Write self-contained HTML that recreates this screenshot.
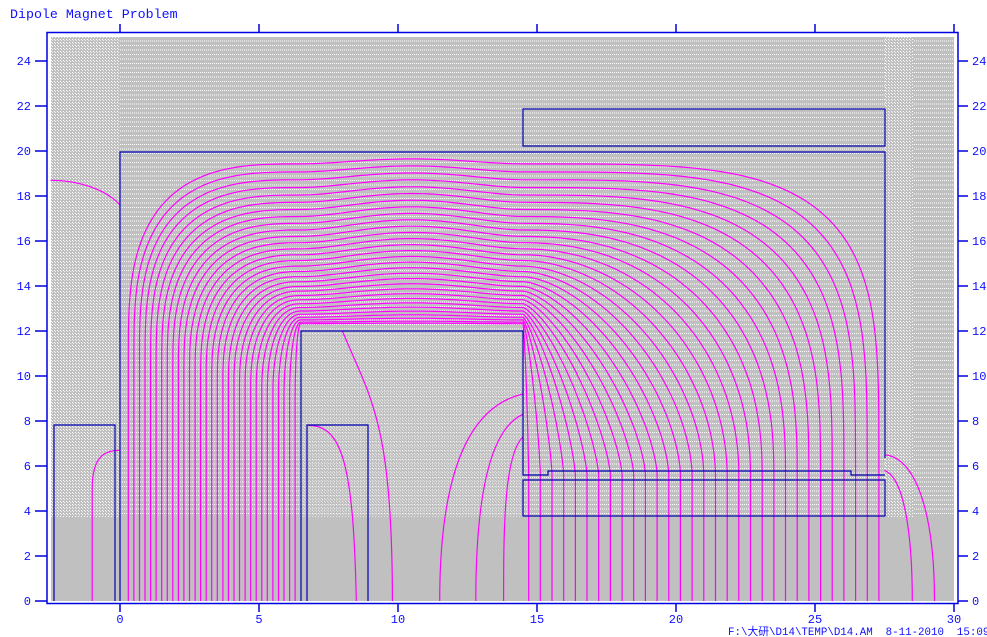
<!DOCTYPE html>
<html><head><meta charset="utf-8"><style>
html,body{margin:0;padding:0;background:#fff;width:987px;height:637px;overflow:hidden}
svg{display:block}
text{font-family:"Liberation Mono","Noto Sans CJK SC",monospace;fill:#1010ff;font-size:12px;white-space:pre}
</style></head><body>
<svg id="s" width="987" height="637" xmlns="http://www.w3.org/2000/svg">
<defs>
<pattern id="dense" width="3" height="3" patternUnits="userSpaceOnUse"><rect width="3" height="3" fill="#c0c0c0"/><rect x="0" y="0" width="1" height="1" fill="#fff"/><rect x="1" y="1" width="1" height="1" fill="#f0f0f0"/></pattern>
<pattern id="sparse" width="6" height="4.5" patternUnits="userSpaceOnUse"><rect width="6" height="4.5" fill="#c0c0c0"/><rect x="0" y="0" width="1" height="1" fill="#fff"/><rect x="2" y="0" width="1" height="1" fill="#fff"/><rect x="4" y="0" width="1" height="1" fill="#fff"/></pattern>
</defs>
<text x="10" y="18" style="font-size:13.3px">Dipole Magnet Problem</text>
<rect x="47" y="32.5" width="911" height="571" fill="none" stroke="#0000e0" stroke-width="1.5"/>
<rect x="51" y="37" width="903" height="564" fill="#c0c0c0"/>
<rect x="51" y="37" width="903" height="480" fill="url(#sparse)"/>
<rect x="51" y="37" width="69" height="480" fill="url(#dense)"/>
<rect x="885" y="37" width="28" height="480" fill="url(#dense)"/>
<rect x="301" y="331" width="222" height="186" fill="url(#dense)" opacity="0.6"/>
<g id="fl" fill="none" stroke="#ff00ff" stroke-width="1.2"></g>
<g fill="none" stroke="#0000b0" stroke-width="1.2">
<path d="M120 601 V152 H885 V458"/>
<rect x="523" y="109" width="362" height="37"/>
<path d="M301 601 V331 H523 V475 H548 V471 H851 V475 H885"/>
<rect x="523" y="480" width="362" height="36"/>
<path d="M54 601 V425 H115 V601"/>
<path d="M307 601 V425 H368 V601"/>
</g>
<g id="ax" stroke="#0000e0" stroke-width="1.5"></g>
<text x="728" y="635" style="font-size:10.8px" xml:space="preserve">F:\大研\D14\TEMP\D14.AM  8-11-2010  15:09:36</text>
</svg>
<script>
var X=u=>(120+27.8*u).toFixed(1), Y=v=>(601-22.5*v).toFixed(1);
function pt(u,v){return X(u)+' '+Y(v);}
var fl=document.getElementById('fl'),ax=document.getElementById('ax'),s=document.getElementById('s');
function P(d){var p=document.createElementNS('http://www.w3.org/2000/svg','path');p.setAttribute('d',d);fl.appendChild(p);}
var N=30,M=40;
for(var k=0;k<=N;k++){var t=k/N;var a=0.3+t*6.0,b=27.3-t*12.6;
var h=12.35+7.3*Math.pow(1-t,1.3);
var hE=12.25+(h-12.25)*(0.75+0.22*(1-t));
var ycl=11-2*t, nl=3-t, nr=1.3+2.7*Math.pow(1-t,2.5), ycr=5.6;
var d='M'+pt(a,0)+' L'+pt(a,ycl);
for(var i=1;i<=M;i++){var th=i/M*Math.PI/2;
d+=' L'+pt(6.5-(6.5-a)*Math.pow(Math.cos(th),2/nl), ycl+(hE-ycl)*Math.pow(Math.sin(th),2/nl));}
for(var i=1;i<M;i++){var x=6.5+8*i/M, sx=(x-10.5)/4;
d+=' L'+pt(x, hE+(h-hE)*Math.pow(1-sx*sx,2));}
for(var i=M;i>=0;i--){var th=i/M*Math.PI/2;
d+=' L'+pt(14.5+(b-14.5)*Math.pow(Math.cos(th),2/nr), ycr+(hE-ycr)*Math.pow(Math.sin(th),2/nr));}
d+=' L'+pt(b,0);P(d);}
P('M'+pt(-2.5,18.7)+' C'+pt(-1.5,18.7)+' '+pt(-0.5,18.3)+' '+pt(0,17.6));
P('M'+pt(-1,0)+' V'+Y(5)+' C'+pt(-1,6.5)+' '+pt(-0.5,6.7)+' '+pt(0,6.7));
P('M'+pt(6.8,7.8)+' C'+pt(8,7.8)+' '+pt(8.4,6)+' '+pt(8.5,0));
P('M'+pt(8,12)+' C'+pt(9,9)+' '+pt(9.8,8)+' '+pt(9.8,0));
P('M'+pt(14.5,9.2)+' C'+pt(12,8.5)+' '+pt(11.5,4)+' '+pt(11.5,0));
P('M'+pt(14.5,8.3)+' C'+pt(13,7.5)+' '+pt(12.8,3)+' '+pt(12.8,0));
P('M'+pt(14.5,7.3)+' C'+pt(13.8,6.5)+' '+pt(13.8,3)+' '+pt(13.8,0));
P('M'+pt(27.5,6.5)+' C'+pt(28.6,6.4)+' '+pt(29.3,4)+' '+pt(29.3,0));
P('M'+pt(27.5,5.8)+' C'+pt(28.2,5.5)+' '+pt(28.5,3)+' '+pt(28.5,0));
function L(x1,y1,x2,y2){var l=document.createElementNS('http://www.w3.org/2000/svg','line');l.setAttribute('x1',x1);l.setAttribute('y1',y1);l.setAttribute('x2',x2);l.setAttribute('y2',y2);ax.appendChild(l);}
function T(x,y,str,anc){var e=document.createElementNS('http://www.w3.org/2000/svg','text');e.setAttribute('x',x);e.setAttribute('y',y);e.setAttribute('text-anchor',anc);e.textContent=str;s.appendChild(e);}
for(var v=0;v<=24;v+=2){var y=601-22.5*v;L(35,y,47,y);L(958,y,968,y);T(31,y+4,v,'end');T(972,y+4,v,'start');}
for(var u=0;u<=30;u+=5){var x=120+27.8*u;L(x,604,x,612);L(x,24,x,32);T(x,623,u,'middle');}
</script>
</body></html>
